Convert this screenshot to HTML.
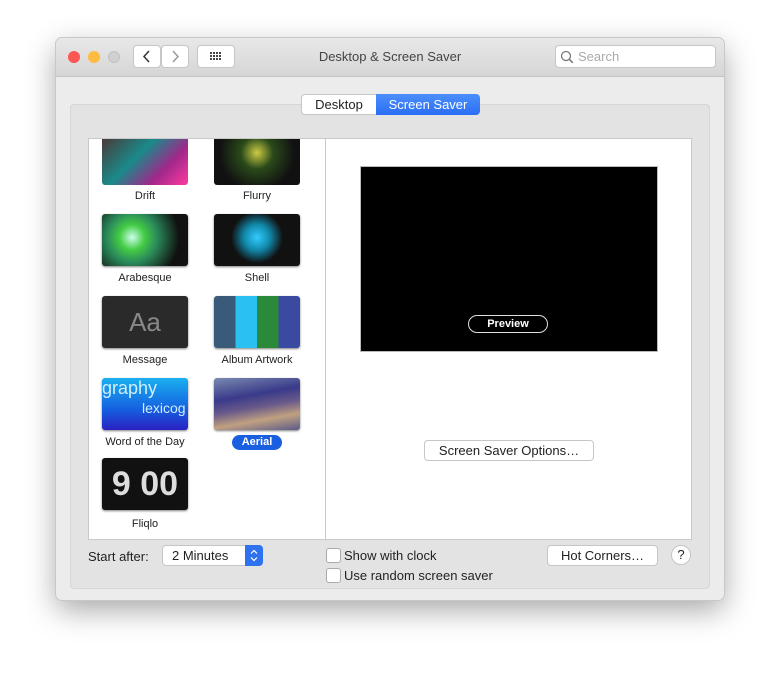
<html><head><style>
body{margin:0;width:780px;height:674px;background:#fff;font-family:"Liberation Sans",sans-serif;position:relative;overflow:hidden}
.a{position:absolute}
.win{left:56px;top:38px;width:668px;height:562px;background:#ececec;border-radius:6px;box-shadow:0 0 0 1px #c8c8c8,0 10px 30px rgba(0,0,0,.35);overflow:hidden}
.tb{left:0;top:0;width:668px;height:38px;background:linear-gradient(#e8e8e8,#d6d6d6);border-bottom:1px solid #c4c4c4}
.btn{background:#fff;border:1px solid #c6c6c6;border-radius:4px;box-sizing:border-box;font-size:13px;color:#222;text-align:center}
.th{width:86px;height:52px;border-radius:3px;box-shadow:0 1px 2px rgba(0,0,0,.5);background:#1b1b1b}
.lb{font-size:11px;color:#222;text-align:center;width:120px}
.cb{width:13px;height:13px;border:1px solid #aaa;border-radius:3px;background:#fff}
</style></head><body>
<div class="a win">
<div class="a tb"></div>
<div class="a" style="left:12px;top:13px;width:12px;height:12px;border-radius:50%;background:#fc5753"></div>
<div class="a" style="left:32px;top:13px;width:12px;height:12px;border-radius:50%;background:#fdbc40"></div>
<div class="a" style="left:52px;top:13px;width:12px;height:12px;border-radius:50%;background:#d0d0d0;border:1px solid #c0c0c0;box-sizing:border-box"></div>
<div class="a btn" style="left:77px;top:7px;width:28px;height:23px"><svg width="26" height="21"><path d="M15 5l-5 5.5 5 5.5" stroke="#333" stroke-width="1.5" fill="none"/></svg></div>
<div class="a btn" style="left:105px;top:7px;width:28px;height:23px"><svg width="26" height="21"><path d="M11 5l5 5.5-5 5.5" stroke="#999" stroke-width="1.5" fill="none"/></svg></div>
<div class="a btn" style="left:141px;top:7px;width:38px;height:23px"><svg width="36" height="21"><g fill="#444"><rect x="12" y="6" width="2" height="2"/><rect x="15" y="6" width="2" height="2"/><rect x="18" y="6" width="2" height="2"/><rect x="21" y="6" width="2" height="2"/><rect x="12" y="9" width="2" height="2"/><rect x="15" y="9" width="2" height="2"/><rect x="18" y="9" width="2" height="2"/><rect x="21" y="9" width="2" height="2"/><rect x="12" y="12" width="2" height="2"/><rect x="15" y="12" width="2" height="2"/><rect x="18" y="12" width="2" height="2"/><rect x="21" y="12" width="2" height="2"/></g></svg></div>
<div class="a" style="left:0;width:668px;top:11px;text-align:center;font-size:13px;color:#444">Desktop &amp; Screen Saver</div>
<div class="a btn" style="left:499px;top:7px;width:161px;height:23px;text-align:left;padding-left:22px;line-height:21px;color:#aaa">Search</div>
<svg class="a" style="left:504px;top:12px" width="14" height="14"><circle cx="6" cy="6" r="4.5" stroke="#777" stroke-width="1.3" fill="none"/><path d="M9.3 9.3l3.5 3.5" stroke="#777" stroke-width="1.5"/></svg>
<div class="a" style="left:14px;top:66px;width:640px;height:485px;background:#e3e3e3;border:1px solid #d6d6d6;border-radius:4px;box-sizing:border-box"></div>
<div class="a btn" style="left:245px;top:56px;width:76px;height:21px;border-radius:4px 0 0 4px;line-height:19px">Desktop</div>
<div class="a" style="left:320px;top:56px;width:104px;height:21px;border-radius:0 4px 4px 0;background:linear-gradient(#4c8ffb,#2a6ef5);color:#fff;font-size:13px;text-align:center;line-height:21px">Screen Saver</div>
<div class="a" style="left:32px;top:100px;width:604px;height:402px;background:#fff;border:1px solid #c9c9c9;box-sizing:border-box"></div>
<div class="a" style="left:269px;top:100px;width:1px;height:402px;background:#c9c9c9"></div>
<div class="a" style="left:304px;top:128px;width:298px;height:186px;background:#000;border:1px solid #bbb;box-sizing:border-box"></div>
<div class="a" style="left:412px;top:277px;width:80px;height:18px;border:1px solid #ddd;border-radius:10px;color:#fff;font-size:11px;font-weight:bold;text-align:center;line-height:16px;box-sizing:border-box">Preview</div>
<div class="a btn" style="left:368px;top:402px;width:170px;height:21px;line-height:19px">Screen Saver Options…</div>
<div class="a" style="left:46px;top:101px;width:86px;height:46px;border-radius:0 0 3px 3px;background:linear-gradient(135deg,#4a3a3a,#1a8a8a 40%,#a0288a 70%,#ff3aa0)"></div>
<div class="a" style="left:158px;top:101px;width:86px;height:46px;border-radius:0 0 3px 3px;background:radial-gradient(circle at 50% 30%,#cc4 0,#2a4a1a 30%,#111 70%)"></div>
<div class="a lb" style="left:29px;top:152px">Drift</div><div class="a lb" style="left:141px;top:152px">Flurry</div>
<div class="a th" style="left:46px;top:176px;background:radial-gradient(circle at 35% 45%,#cfe 0,#4c4 20%,#2a8a5a 40%,#111 75%)"></div>
<div class="a th" style="left:158px;top:176px;background:radial-gradient(circle at 50% 45%,#3cf 0,#18a 25%,#111 50%)"></div>
<div class="a lb" style="left:29px;top:234px">Arabesque</div><div class="a lb" style="left:141px;top:234px">Shell</div>
<div class="a th" style="left:46px;top:258px;background:#2a2a2a;color:#888;font-size:26px;text-align:center;line-height:52px">Aa</div>
<div class="a th" style="left:158px;top:258px;background:linear-gradient(90deg,#3a5a7a 25%,#2ac0f0 25%,#2ac0f0 50%,#2a8a3a 50%,#2a8a3a 75%,#3a4aa0 75%)"></div>
<div class="a lb" style="left:29px;top:316px">Message</div><div class="a lb" style="left:141px;top:316px">Album Artwork</div>
<div class="a th" style="left:46px;top:340px;background:linear-gradient(#1ab0f0,#1560e0 60%,#2a20c0);color:#cfefff;font-size:18px;overflow:hidden;line-height:20px">graphy<br><span style="font-size:14px;padding-left:40px">lexicog</span></div>
<div class="a th" style="left:158px;top:340px;background:linear-gradient(170deg,#7a8ab0,#3a3a8a 35%,#6a5a8a 55%,#c0a080 75%,#5a5a8a)"></div>
<div class="a lb" style="left:29px;top:398px">Word of the Day</div>
<div class="a" style="left:176px;top:397px;width:50px;height:15px;border-radius:8px;background:#1a5fe0;color:#fff;font-size:11px;font-weight:bold;text-align:center;line-height:15px">Aerial</div>
<div class="a th" style="left:46px;top:420px;background:#111;color:#ddd;font-size:34px;font-weight:bold;text-align:center;line-height:52px">9 00</div>
<div class="a lb" style="left:29px;top:480px">Fliqlo</div>
<div class="a" style="left:32px;top:511px;font-size:13px;color:#222">Start after:</div>
<div class="a btn" style="left:106px;top:507px;width:101px;height:21px;text-align:left;padding-left:9px;line-height:19px">2 Minutes</div>
<div class="a" style="left:189px;top:507px;width:18px;height:21px;background:#2f72f0;border-radius:0 4px 4px 0"><svg width="18" height="21"><path d="M6 8.5l3-3 3 3M6 12.5l3 3 3-3" stroke="#fff" stroke-width="1.2" fill="none"/></svg></div>
<div class="a cb" style="left:270px;top:510px"></div><div class="a" style="left:288px;top:510px;font-size:13px;color:#222">Show with clock</div>
<div class="a cb" style="left:270px;top:530px"></div><div class="a" style="left:288px;top:530px;font-size:13px;color:#222">Use random screen saver</div>
<div class="a btn" style="left:491px;top:507px;width:111px;height:21px;line-height:19px">Hot Corners…</div>
<div class="a btn" style="left:615px;top:507px;width:20px;height:20px;border-radius:50%;line-height:18px">?</div>
</div>
</body></html>
